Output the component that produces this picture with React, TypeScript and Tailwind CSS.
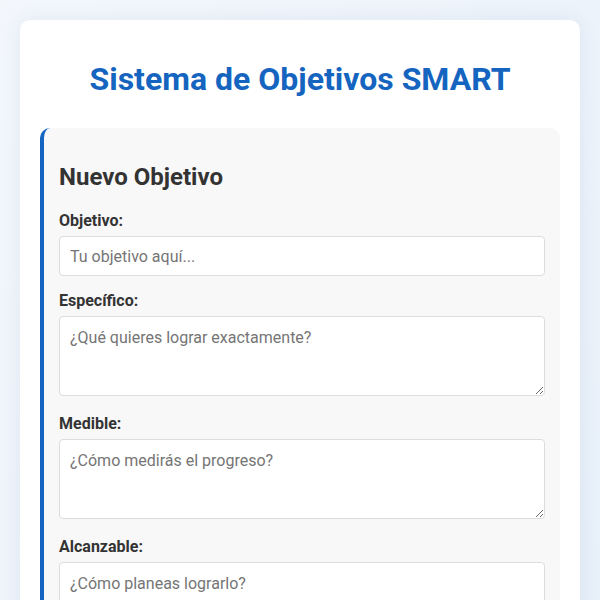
import { useState } from 'react';

type Field = {
  id: string;
  label: string;
  placeholder: string;
  multiline: boolean;
};

const fields: Field[] = [
  { id: 'objetivo', label: 'Objetivo:', placeholder: 'Tu objetivo aquí...', multiline: false },
  { id: 'especifico', label: 'Específico:', placeholder: '¿Qué quieres lograr exactamente?', multiline: true },
  { id: 'medible', label: 'Medible:', placeholder: '¿Cómo medirás el progreso?', multiline: true },
  { id: 'alcanzable', label: 'Alcanzable:', placeholder: '¿Cómo planeas lograrlo?', multiline: true },
  { id: 'relevante', label: 'Relevante:', placeholder: '¿Por qué es importante?', multiline: true },
];

export default function App() {
  const [values, setValues] = useState<Record<string, string>>({});

  const update = (id: string, v: string) => setValues(prev => ({ ...prev, [id]: v }));

  return (
    <div className="min-h-screen bg-gradient-to-br from-[#f3f7fc] to-[#e6eff9] p-5 font-['Roboto','Liberation_Sans',sans-serif] text-[#333]">
      <div className="bg-white rounded-[10px] shadow-[0_0_20px_rgba(0,60,140,0.08)] p-5">
        <h1 className="text-center text-[32px] font-bold text-[#1565c0] leading-[38px] mt-[20px] mb-[30px]">
          Sistema de Objetivos SMART
        </h1>

        <div className="bg-[#f8f8f8] rounded-[10px] border-l-4 border-[#1565c0] px-[15px] pt-[15px] pb-5">
          <h2 className="text-2xl font-bold leading-[28px] mt-5 mb-5">Nuevo Objetivo</h2>

          {fields.map(f => (
            <div key={f.id} className={f.multiline ? 'mb-[18px]' : 'mb-[15px]'}>
              <label htmlFor={f.id} className="block font-bold text-base leading-5 mb-[5px]">
                {f.label}
              </label>
              {f.multiline ? (
                <textarea
                  id={f.id}
                  value={values[f.id] ?? ''}
                  onChange={e => update(f.id, e.target.value)}
                  placeholder={f.placeholder}
                  className="block w-full h-[80px] bg-white border border-[#ddd] rounded px-[10px] pt-[11px] pb-2 text-base leading-5 placeholder:text-[#757575] outline-none"
                />
              ) : (
                <input
                  id={f.id}
                  value={values[f.id] ?? ''}
                  onChange={e => update(f.id, e.target.value)}
                  placeholder={f.placeholder}
                  className="block w-full h-[40px] bg-white border border-[#ddd] rounded px-[10px] text-base placeholder:text-[#757575] outline-none"
                />
              )}
            </div>
          ))}
        </div>
      </div>
    </div>
  );
}
